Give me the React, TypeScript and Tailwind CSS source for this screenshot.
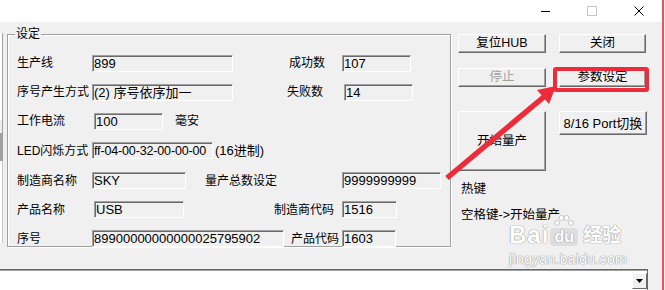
const font = "font-['Liberation_Sans','Noto_Sans_CJK_SC',sans-serif]";

function Box({ className, children }: { className: string; children?: React.ReactNode }) {
  return (
    <div
      className={`${className} h-[17px] flex items-center pl-[1px] bg-[#f0f0f0] border border-t-[#a0a0a0] border-l-[#a0a0a0] border-r-white border-b-white shadow-[inset_1px_1px_0_#696969] leading-none whitespace-nowrap overflow-hidden`}
    >
      {children}
    </div>
  );
}

function Btn({ className, children, disabled }: { className: string; children: React.ReactNode; disabled?: boolean }) {
  return (
    <div
      className={`${className} flex items-center justify-center bg-[#f0f0f0] border border-t-white border-l-white border-r-[#696969] border-b-[#696969] shadow-[inset_-1px_-1px_0_#a0a0a0] leading-none ${disabled ? 'text-[#a0a0a0]' : 'text-black'}`}
    >
      {children}
    </div>
  );
}

export default function App() {
  return (
    <div className={`relative w-[665px] h-[290px] overflow-hidden bg-white text-[12px] text-black ${font}`}>
      <div className="flex h-full">
        <div className="w-[662px] flex flex-col">
          {/* title bar */}
          <div className="h-[22px] bg-white flex items-center justify-end gap-[37px] pr-[18px]">
            <svg width="9" height="10" viewBox="0 0 9 10">
              <line x1="0" y1="5.5" x2="9" y2="5.5" stroke="#000" strokeWidth="1" />
            </svg>
            <svg width="10" height="10" viewBox="0 0 10 10">
              <rect x="0.5" y="0.5" width="9" height="9" fill="none" stroke="#c8c8c8" />
            </svg>
            <svg width="10" height="10" viewBox="0 0 10 10">
              <path d="M0.5 0.5 L9.5 9.5 M9.5 0.5 L0.5 9.5" stroke="#000" strokeWidth="1" />
            </svg>
          </div>

          {/* main */}
          <div className="h-[247px] bg-[#f0f0f0] flex items-start">
            <div className="w-[3px] mt-[11px] flex flex-col">
              <div className="h-[87px] bg-white border-r border-[#a0a0a0]" />
              <div className="h-[13px] border-r border-[#a0a0a0]" />
              <div className="h-[28px] bg-[#a0a0a0]" />
              <div className="h-[82px] bg-white border-r border-[#c8c8c8]" />
            </div>

            {/* group box */}
            <div className="relative ml-[4px] mt-[12px] w-[444px] h-[213px] border border-[#a0a0a0] shadow-[inset_1px_1px_0_white,1px_1px_0_white]">
              <span className="absolute left-[7px] top-[-8px] px-[1px] bg-[#f0f0f0] leading-[14px]">设定</span>
              <div className="flex flex-col gap-[11px] pt-[19px] pl-[9px] text-[12px]">
                <div className="flex items-center">
                  <span className="w-[75px]">生产线</span>
                  <Box className="w-[141px] text-[13px]">899</Box>
                  <span className="w-[109px] pl-[56px]">成功数</span>
                  <Box className="w-[69px] text-[13px]">107</Box>
                </div>
                <div className="flex items-center">
                  <span className="w-[75px]">序号产生方式</span>
                  <Box className="w-[141px] text-[13px]">(2) 序号依序加一</Box>
                  <span className="w-[111px] pl-[54px]">失败数</span>
                  <Box className="w-[69px] text-[13px]">14</Box>
                </div>
                <div className="flex items-center">
                  <span className="w-[77px]">工作电流</span>
                  <Box className="w-[69px] text-[13px]">100</Box>
                  <span className="pl-[12px]">毫安</span>
                </div>
                <div className="flex items-center">
                  <span className="w-[75px] whitespace-nowrap">LED闪烁方式</span>
                  <Box className="w-[121px] text-[12.5px] tracking-[-0.15px]">ff-04-00-32-00-00-00</Box>
                  <span className="pl-[2px] text-[13px]">(16进制)</span>
                </div>
                <div className="flex items-center">
                  <span className="w-[75px]">制造商名称</span>
                  <Box className="w-[94px] text-[13px]">SKY</Box>
                  <span className="w-[156px] pl-[19px]">量产总数设定</span>
                  <Box className="w-[99px] text-[13px]">9999999999</Box>
                </div>
                <div className="flex items-center">
                  <span className="w-[77px]">产品名称</span>
                  <Box className="w-[90px] text-[13px]">USB</Box>
                  <span className="w-[158px] pl-[90px]">制造商代码</span>
                  <Box className="w-[55px] text-[13px]">1516</Box>
                </div>
                <div className="flex items-center">
                  <span className="w-[75px]">序号</span>
                  <Box className="w-[192px] text-[13px]">89900000000000025795902</Box>
                  <span className="w-[58px] pl-[7px]">产品代码</span>
                  <Box className="w-[54px] text-[13px]">1603</Box>
                </div>
              </div>
            </div>

            {/* buttons */}
            <div className="ml-[7px] mt-[12px] flex flex-col">
              <div className="flex gap-[13px]">
                <Btn className="w-[88px] h-[19px] text-[12.5px]">复位HUB</Btn>
                <Btn className="w-[87px] h-[19px] text-[12.5px]">关闭</Btn>
              </div>
              <div className="flex gap-[13px] mt-[15px]">
                <Btn className="w-[88px] h-[19px] text-[12.5px]" disabled>停止</Btn>
                <Btn className="w-[87px] h-[19px] text-[12.5px]">参数设定</Btn>
              </div>
              <div className="flex gap-[13px] mt-[24px] items-start">
                <Btn className="w-[88px] h-[60px] text-[12.5px]">开始量产</Btn>
                <Btn className="w-[88px] h-[24px] text-[13px]">8/16 Port切换</Btn>
              </div>
              <div className="mt-[11px] pl-[3px] leading-[14px] text-[12.5px]">热键</div>
              <div className="mt-[12px] pl-[3px] leading-[14px] text-[12.5px]">空格键-&gt;开始量产</div>
            </div>
          </div>

          {/* combo */}
          <div className="h-[21px] flex">
            <div className="w-[648px] h-full bg-white border-t border-r border-[#696969] shadow-[inset_0_1px_0_#a0a0a0] flex justify-end items-start pt-[3px]">
              <div className="w-[15px] h-[16px] bg-[#f0f0f0] border border-t-white border-l-white border-r-[#696969] border-b-[#696969] flex items-center justify-center">
                <svg width="7" height="4" viewBox="0 0 7 4">
                  <path d="M0 0 H7 L3.5 4 Z" fill="#000" />
                </svg>
              </div>
            </div>
            <div className="flex-1 bg-[#f0f0f0]" />
          </div>
        </div>
        <div className="w-[2px] bg-[#e8545d]" />
        <div className="flex-1 bg-[#f0f0f0]" />
      </div>

      {/* watermark */}
      <div className="absolute left-[509px] top-[224px] pointer-events-none select-none text-white [text-shadow:0_0_1px_#a0a0a0,0_0_1px_#a0a0a0,0_0_1px_#a0a0a0]">
        <div className="flex items-end">
          <span className="text-[24px] font-bold leading-[22px] tracking-[1px]">Bai</span>
          <span className="relative ml-[1px] w-[28px] h-[18px] rounded-[4px] bg-[#dedede] text-[16px] font-bold leading-[18px] text-center text-white">
            du
            <svg className="absolute left-[3px] top-[-13px]" width="22" height="12" viewBox="0 0 22 12">
              <circle cx="4" cy="8" r="2.5" fill="#fff" stroke="#b8b8b8" strokeWidth="0.8" />
              <circle cx="8.5" cy="3" r="2.5" fill="#fff" stroke="#b8b8b8" strokeWidth="0.8" />
              <circle cx="13.5" cy="3" r="2.5" fill="#fff" stroke="#b8b8b8" strokeWidth="0.8" />
              <circle cx="18" cy="8" r="2.5" fill="#fff" stroke="#b8b8b8" strokeWidth="0.8" />
            </svg>
          </span>
          <span className="ml-[5px] text-[19px] leading-[20px] font-bold">经验</span>
        </div>
        <div className="mt-[6px] text-[14px] leading-[14px] tracking-[0.3px]">jingyan.baidu.com</div>
      </div>

      {/* red highlight + arrow */}
      <div className="absolute left-[553px] top-[67px] w-[96px] h-[25px] border-4 border-[#ee2b3a] rounded-[3px] pointer-events-none" />
      <svg className="absolute left-0 top-0 pointer-events-none" width="665" height="290" viewBox="0 0 665 290">
        <line x1="447" y1="178" x2="545" y2="96" stroke="#ee2b3a" strokeWidth="5.5" />
        <polygon points="556,86 549,104 537,90" fill="#ee2b3a" />
      </svg>
    </div>
  );
}
